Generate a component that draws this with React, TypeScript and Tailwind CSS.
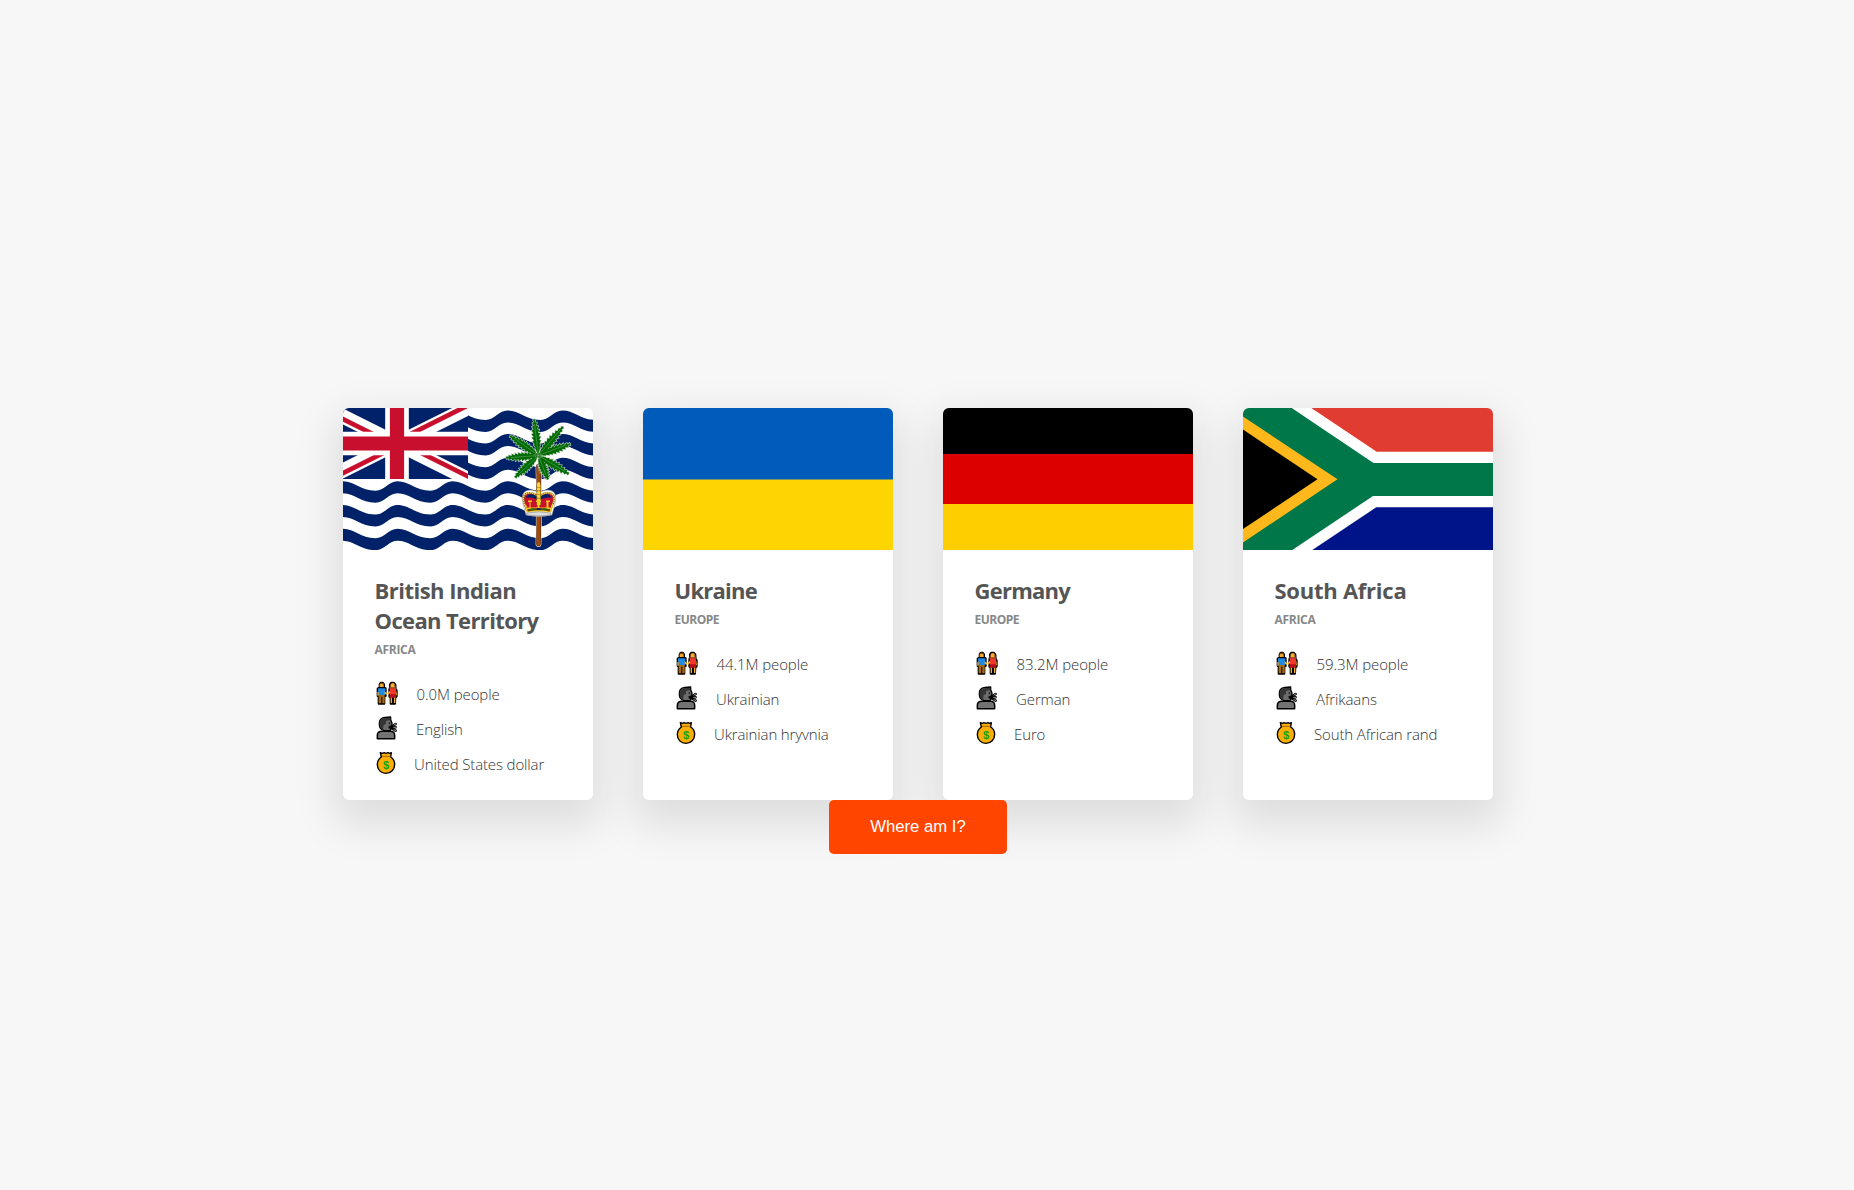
import React from 'react';

/* ---------- flags ---------- */

const flagClass = 'block h-[142px] w-[250px]';

const crests = [0, 1, 2, 3, 4, 5];
const waveTops = [2.4, 26, 49.7, 73.3, 97, 120.7];

function wavePath(y: number) {
  const start = -55.5;
  let d = `M${start} ${y}`;
  crests.forEach(() => {
    d += 'c12 0 18 9.5 33 9.5c9 0 13-9.5 22-9.5';
  });
  d += 'v12';
  crests.forEach(() => {
    d += 'c-9 0-13 9.5-22 9.5c-15 0-21-9.5-33-9.5';
  });
  return d + 'z';
}

const frondTips: [number, number][] = [
  [191.2, 11.2],
  [220, 18.8],
  [227.5, 36],
  [225.8, 66],
  [205, 71.5],
  [172, 69.5],
  [163, 49.8],
  [167, 27.8],
];

function frondPath([tx, ty]: [number, number]) {
  const ox = 195.4;
  const oy = 47.5;
  const dx = tx - ox;
  const dy = ty - oy;
  const len = Math.hypot(dx, dy);
  const ux = dx / len;
  const uy = dy / len;
  const steps = 10;
  const side = (sign: number) => {
    const pts: string[] = [];
    for (let i = 0; i < steps; i++) {
      const t = (i + 0.2) / steps;
      const w = 0.4 + 3.4 * Math.sin(Math.PI * Math.pow(t, 0.85));
      const inner = t * len;
      const outer = inner + 3;
      const p = (a: number, b: number) => `${(ox + ux * a - uy * b * sign).toFixed(2)} ${(oy + uy * a + ux * b * sign).toFixed(2)}`;
      pts.push(p(inner, w * 0.65), p(Math.min(outer, len - 0.5), w * 1.2));
    }
    return pts;
  };
  return `M${ox} ${oy}L${side(1).join('L')}L${tx} ${ty}L${side(-1).reverse().join('L')}Z`;
}

const fronds = frondTips.map(frondPath).join('');

function UnionJack() {
  return (
    <svg x="-17" y="0" width="142" height="71" viewBox="0 0 60 30">
      <clipPath id="saltire">
        <path d="M30 15h30v15zv15H0zH0V0zV0h30z" />
      </clipPath>
      <path d="M0 0v30h60V0z" fill="#012169" />
      <path d="M0 0l60 30M60 0L0 30" stroke="#fff" strokeWidth="6" />
      <path d="M0 0l60 30M60 0L0 30" clipPath="url(#saltire)" stroke="#C8102E" strokeWidth="4" />
      <path d="M30 0v30M0 15h60" stroke="#fff" strokeWidth="10" />
      <path d="M30 0v30M0 15h60" stroke="#C8102E" strokeWidth="6" />
    </svg>
  );
}

function Crown() {
  return (
    <g>
      <path d="M183 107C181 99 178 92 180 86c2-5 11-5 16-1 5-4 14-4 16 1 2 6-1 13-3 21q-13 3-26 0z" fill="#fff" stroke="#888" strokeWidth=".5" />
      <path d="M183 103c-2-8-4-12-2-15 3-4 11-3 14.500-1 4-2 12-3 14.500 1 2 3 0 7-2 15z" fill="#C8102E" />
      <path d="M183 90c1-5 9-5 12.500-1v3.500c-5-3-9-3.500-12.500-2.500zM208.500 90c-1-5-9-5-12.500-1v3.500c5-3 9-3.500 12.500-2.500z" fill="#012169" />
      <path d="M183 99c-4-7-3-12 0-13.500 4-1.500 8-.5 12 2.500M208.500 99c4-7 3-12 0-13.500-4-1.500-8-.5-12 2.500" fill="none" stroke="#7a5c10" strokeWidth="1.800" />
      <path d="M183 99c-4-7-3-12 0-13.500 4-1.500 8-.5 12 2.500M208.500 99c4-7 3-12 0-13.500-4-1.500-8-.5-12 2.500" fill="none" stroke="#F5D76A" strokeWidth="1.600" strokeDasharray="1.400 .7" />
      <path d="M195.700 77v20" stroke="#8a6510" strokeWidth="4.600" />
      <path d="M195.700 76v21" stroke="#FFD83A" strokeWidth="3.200" strokeDasharray="3 .6" />
      <path d="M182 97h1.500v2.500h3V94h-1.500v-1.500h4V94h-1.500v5.500h7V94h-1.500v-1.500h5V94h-1.500v5.500h7V94H203v-1.500h4V94h-1.500v5.500h3V97h1.500l-1.500 7.500q-12.500-2-25 0z" fill="#F7C81E" />
      <path d="M184.500 102.300q11.500-2.300 22.500 0" fill="none" stroke="#5b4a10" strokeWidth="2.200" />
      <path d="M188 101.300h3M200.500 101.300h3" stroke="#13750f" strokeWidth="1.600" />
      <path d="M194 101h3.500" stroke="#012169" strokeWidth="1.600" />
      <path d="M183.500 105q12-2.500 24.500 0l-.5 2q-11.500 2-23.500 0z" fill="#ddd" stroke="#777" strokeWidth=".5" />
      <circle cx="195.700" cy="75.500" r="1.500" fill="#FFD83A" />
    </g>
  );
}

function TerritoryFlag() {
  return (
    <svg className={flagClass} viewBox="0 0 250 142">
      <path d="M0 0h250v142H0z" fill="#fff" />
      {waveTops.map((y) => (
        <path key={y} d={wavePath(y)} fill="#012169" />
      ))}
      <path d="M0 0h125v72H0z" fill="#fff" />
      <UnionJack />
      <path d="M195.500 60q.8 30 0 76" fill="none" stroke="#e8e0d8" strokeWidth="5.800" strokeLinecap="round" />
      <path d="M195.500 58q.8 30 0 78" fill="none" stroke="#5c2a08" strokeWidth="4.600" strokeLinecap="round" />
      <path d="M195.500 58q.8 30 0 78" fill="none" stroke="#A5490B" strokeWidth="3.400" strokeLinecap="round" />
      <path d={fronds} fill="#fff" stroke="#c5cfc5" strokeWidth="1.200" />
      <path d={fronds} fill="#006B00" />
      <path d="M195.400 47.500L191.500 16M195.400 47.500L217 22M195.400 47.500L223 37M195.400 47.500L222 63.500M195.400 47.500L203 67M195.400 47.500L176 66M195.400 47.500L168 49.500M195.400 47.500L171 30" stroke="#9db89d" strokeWidth=".4" />
      <Crown />
    </svg>
  );
}

function UkraineFlag() {
  return (
    <div className={flagClass}>
      <div className="h-[71px] bg-[#005BBB]" />
      <div className="h-px bg-[#7F985E]" />
      <div className="h-[70px] bg-[#FFD500]" />
    </div>
  );
}

function GermanyFlag() {
  return (
    <div className={flagClass}>
      <div className="h-[46px] bg-black" />
      <div className="h-[50px] bg-[#DD0000]" />
      <div className="h-[46px] bg-[#FFCE00]" />
    </div>
  );
}

function SouthAfricaFlag() {
  return (
    <svg className={flagClass} viewBox="0 0 250 142">
      <path d="M0 0h250v142H0z" fill="#fff" />
      <path d="M68.300 0L133.700 43.700H250V0z" fill="#E03C31" />
      <path d="M69.300 142L133.200 99.300H250V142z" fill="#001489" />
      <path d="M0 0H48.700L130.500 55H250V88H130L49.300 142H0z" fill="#007749" />
      <path d="M0 8.500L94.500 71.300L0 134.500z" fill="#FFB81C" />
      <path d="M0 21.600L74.500 71.300L0 121z" fill="#000" />
    </svg>
  );
}

/* ---------- row icons ---------- */

const iconClass = 'mt-[3px] h-[26px] w-6 shrink-0';

function PeopleIcon() {
  return (
    <svg className={iconClass} viewBox="0 0 72 78">
      <g stroke="#000" strokeWidth="6" strokeLinejoin="round" fill="#000">
        <path d="M14 13l3-5h6l4 5v9l5 3v23h-4v23H11V48H8V26l6-4z" />
        <path d="M45 13l4-5h7l5 5 1 14 3 4v18l-4 5-1 17H47V54l-4-4V28l2-6z" />
      </g>
      <path d="M14 14c0-8 12-8 12 0v7H14z" fill="#F0A92B" />
      <path d="M13 14c0-9 14-9 14 0-3-4-11-4-14 0z" fill="#6B3A17" />
      <path d="M9 25h22v20H10z" fill="#1E8AE6" />
      <path d="M7 36h4v11H7zM29 34l8 6-1 4-7-3z" fill="#F6B02C" />
      <path d="M11 45h18v25h-7V50h-3v20h-8z" fill="#A86A12" />
      <path d="M43 26c0-24 20-24 20 0z" fill="#8A4A22" />
      <path d="M48 13c2-4 9-4 10 0v9H48z" fill="#F6B02C" />
      <path d="M44 25h18l2 12-2 8H45z" fill="#F0382B" />
      <path d="M45 43h17l2 10H42z" fill="#B8101E" />
      <path d="M44 32l-6 8 2 4 6-6zM63 32l3 14h-3zM47 53h4v16h-4zM57 53h4v16h-4z" fill="#F6B02C" />
    </svg>
  );
}

function SpeakingIcon() {
  return (
    <svg className={iconClass} viewBox="0 0 72 78">
      <path d="M13 27C12 14 20 8 30 7l17-1v8l4 10-1 13-4 9-15 2-10-4C15 41 13 35 13 27z" fill="#6B6B6B" stroke="#000" strokeWidth="4" strokeLinejoin="round" />
      <path d="M14 28C12 14 22 9 31 9l15-1v7l-13 3v9l-7 3-2 14C17 41 15 36 14 28z" fill="#353535" />
      <path d="M43 21v7" stroke="#151515" strokeWidth="3" />
      <path d="M7 71V61c0-8 6-12 14-12h25c8 0 13 5 13 12v10z" fill="#737373" stroke="#000" strokeWidth="4.500" strokeLinejoin="round" />
      <path d="M46 36l8-4 8-5M44 37h18M46 38l8 4 8 5" stroke="#000" strokeWidth="7.500" strokeLinecap="round" />
      <path d="M57 30l5-3M56 37h7M57 44l5 3" stroke="#A5A5A5" strokeWidth="2.800" strokeLinecap="round" />
    </svg>
  );
}

function MoneyIcon() {
  return (
    <svg className={iconClass} viewBox="0 0 72 78">
      <path d="M16 8l6 2 5-2 6 2 6-2 5 2 5-2-2 13c8 5 12 13 12 22 0 16-11 27-26 27S7 59 7 44c0-10 5-18 12-23z" fill="#F9AE08" stroke="#000" strokeWidth="4.200" strokeLinejoin="round" />
      <path d="M21 19h25" stroke="#A7670B" strokeWidth="3" />
      <text x="33" y="56" textAnchor="middle" className="fill-[#16A31B] font-['Liberation_Sans_Narrow','Liberation_Sans',sans-serif] text-[33px] font-bold">$</text>
    </svg>
  );
}

/* ---------- cards ---------- */

type Country = {
  flag: React.ReactNode;
  name: React.ReactNode;
  region: string;
  regionClass: string;
  people: string;
  language: string;
  currency: string;
};

const countries: Country[] = [
  {
    flag: <TerritoryFlag />,
    name: (
      <>
        <span className="block tracking-[-0.52px]">British Indian</span>
        <span className="block tracking-[-0.63px]">Ocean Territory</span>
      </>
    ),
    region: 'Africa',
    regionClass: 'tracking-[-0.3px]',
    people: '0.0M',
    language: 'English',
    currency: 'United States dollar',
  },
  {
    flag: <UkraineFlag />,
    name: <span className="tracking-[-0.75px]">Ukraine</span>,
    region: 'Europe',
    regionClass: 'tracking-[-0.5px]',
    people: '44.1M',
    language: 'Ukrainian',
    currency: 'Ukrainian hryvnia',
  },
  {
    flag: <GermanyFlag />,
    name: <span className="tracking-[-0.75px]">Germany</span>,
    region: 'Europe',
    regionClass: 'tracking-[-0.5px]',
    people: '83.2M',
    language: 'German',
    currency: 'Euro',
  },
  {
    flag: <SouthAfricaFlag />,
    name: <span className="tracking-[-0.25px]">South Africa</span>,
    region: 'Africa',
    regionClass: 'tracking-[-0.3px]',
    people: '59.3M',
    language: 'Afrikaans',
    currency: 'South African rand',
  },
];

function CountryCard({ c }: { c: Country }) {
  return (
    <article className="w-[250px] overflow-hidden rounded-[5.8px] bg-white shadow-[0_16.7px_41.7px_8.3px_rgba(0,0,0,0.1)]">
      {c.flag}
      <div className="pt-[25px] pr-4 pb-[17px] pl-[31.5px]">
        <h3 className="text-[22px] leading-[30px] font-bold whitespace-nowrap">{c.name}</h3>
        <h4 className={`mt-[7px] text-xs leading-4 font-bold text-[#888] uppercase ${c.regionClass}`}>{c.region}</h4>
        <div className="mt-[19px] text-[15px] leading-[35px] font-light whitespace-nowrap text-[#333]">
          <p className="flex h-[35px] gap-[18px] tracking-[-0.08px]">
            <PeopleIcon />
            <span>{c.people} people</span>
          </p>
          <p className="flex h-[35px] gap-[17.500px] tracking-[-0.1px]">
            <SpeakingIcon />
            <span>{c.language}</span>
          </p>
          <p className="flex h-[35px] gap-[15.500px] tracking-[-0.13px]">
            <MoneyIcon />
            <span>{c.currency}</span>
          </p>
        </div>
      </div>
    </article>
  );
}

export default function App() {
  return (
    <div className="min-h-[1190px] bg-[#f7f7f7] font-['Open_Sans','Noto_Sans',sans-serif] text-[#555]">
      <main className="flex w-[1836px] flex-col items-center pt-[408px]">
        <section className="flex h-[392px] gap-[50px]">
          {countries.map((c) => (
            <CountryCard key={c.currency} c={c} />
          ))}
        </section>
        <button className="relative h-[54px] w-[178px] rounded-[5px] bg-[#ff4500] font-['Liberation_Sans',Arial,sans-serif] text-[16.7px] text-white">Where am I?</button>
      </main>
    </div>
  );
}
